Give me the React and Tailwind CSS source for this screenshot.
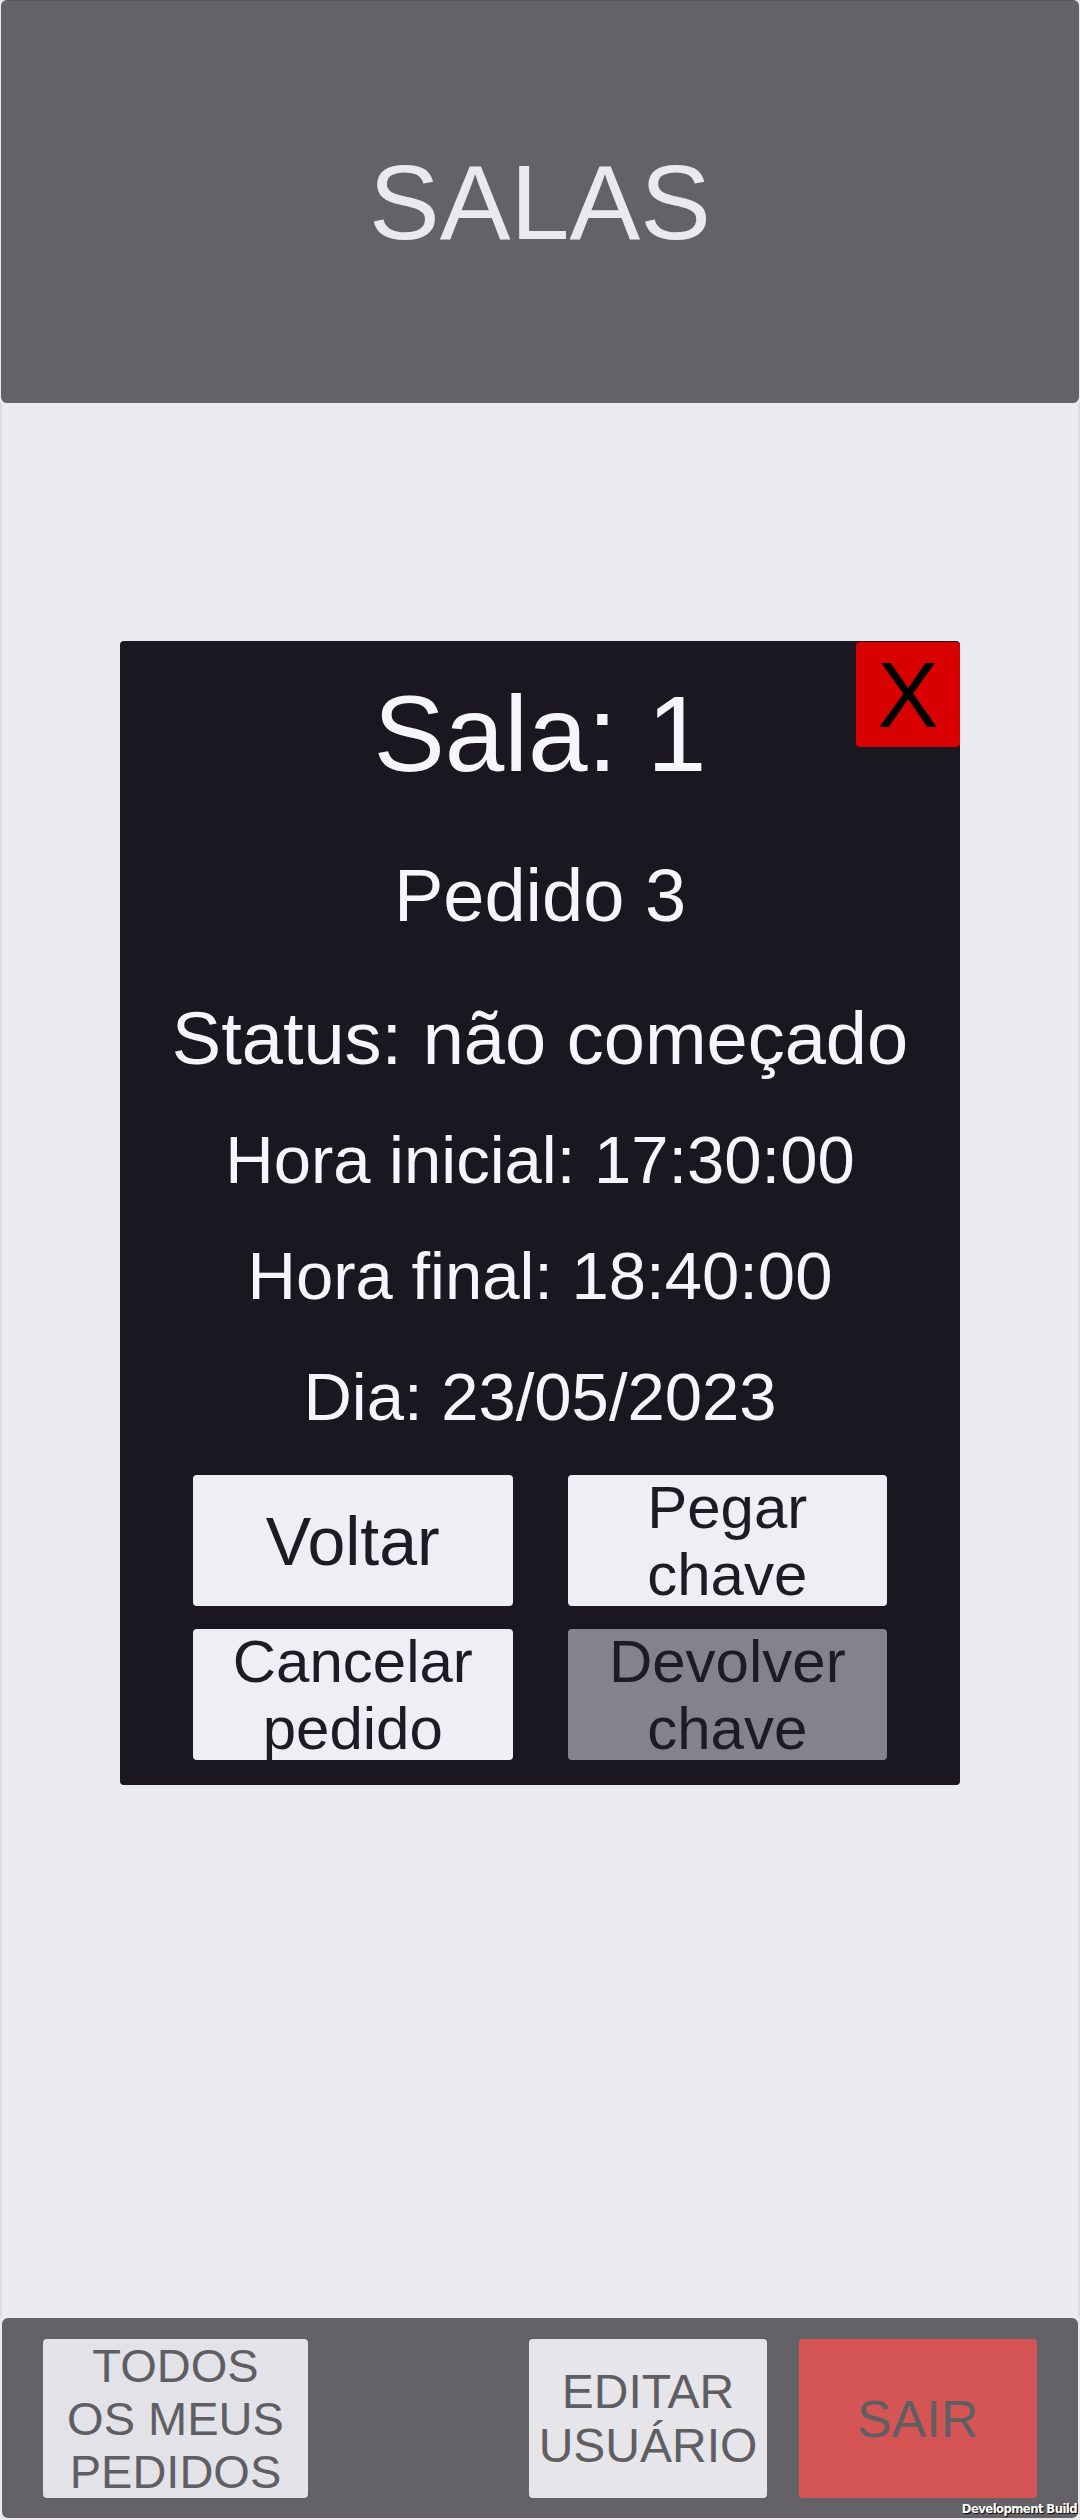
export default function App() {
  return (
    <div className="relative flex h-[2520px] w-[1080px] flex-col overflow-hidden bg-[#ebeaef] font-['Liberation_Sans',Arial,sans-serif]">
      <header className="mx-[1px] flex h-[403px] shrink-0 items-center justify-center rounded-[6px] border-t border-[#58565b] bg-[#646267] text-[106px] leading-none text-[#ebe9ef]">
        SALAS
      </header>

      <main className="flex flex-1 flex-col items-center border-x-2 border-[#dcdbe1] pt-[238px]">
        <section className="relative flex h-[1144px] w-[840px] flex-col items-center rounded-[4px] bg-[#1b1720] text-[#f7f5fc]">
          <button className="absolute right-0 top-[1px] flex h-[105px] w-[104px] items-center justify-center rounded-[4px] bg-[#d80000] text-[92px] leading-none text-black">
            X
          </button>
          <div className="mt-[40px] text-[107px] leading-none">Sala: 1</div>
          <div className="mt-[71px] text-[74px] leading-none">Pedido 3</div>
          <div className="mt-[69px] text-[74px] leading-none">Status: não começado</div>
          <div className="mt-[50px] text-[67px] leading-none">Hora inicial: 17:30:00</div>
          <div className="mt-[49px] text-[67px] leading-none">Hora final: 18:40:00</div>
          <div className="mt-[54px] text-[67px] leading-none">Dia: 23/05/2023</div>

          <div className="mt-[45px] grid w-full grid-cols-2 gap-x-[55px] gap-y-[23px] px-[73px] text-[#1e1b24]">
            <button className="flex h-[131px] items-center justify-center rounded-[4px] bg-[#efeef4] text-[68px] leading-none">Voltar</button>
            <button className="flex h-[131px] items-center justify-center rounded-[4px] bg-[#efeef4] text-[60px] leading-[67px]">
              <span>Pegar<br />chave</span>
            </button>
            <button className="flex h-[131px] items-center justify-center rounded-[4px] bg-[#efeef4] text-[60px] leading-[67px]">
              <span>Cancelar<br />pedido</span>
            </button>
            <button className="flex h-[131px] items-center justify-center rounded-[4px] bg-[#85828b] text-[60px] leading-[67px]">
              <span>Devolver<br />chave</span>
            </button>
          </div>
        </section>
      </main>

      <footer className="mx-[2px] mb-[2px] flex h-[200px] shrink-0 items-start rounded-[6px] bg-[#646267] px-[41px] pt-[21px] text-[#5f5e63]">
        <button className="flex h-[159px] w-[265px] items-center justify-center rounded-[4px] bg-[#e3e2e9] text-[47px] leading-[53px]">
          <span>TODOS<br />OS MEUS<br />PEDIDOS</span>
        </button>
        <button className="ml-auto flex h-[159px] w-[238px] items-center justify-center rounded-[4px] bg-[#e6e5ea] text-[48px] leading-[54px]">
          <span>EDITAR<br />USUÁRIO</span>
        </button>
        <button className="ml-[32px] flex h-[159px] w-[238px] items-center justify-center rounded-[4px] bg-[#d55454] text-[52px] leading-none">
          SAIR
        </button>
      </footer>

      <div className="absolute bottom-[5px] right-[3px] font-['DejaVu_Sans_Condensed','DejaVu_Sans',sans-serif] text-[13px] font-bold leading-none tracking-[-0.6px] text-white [font-stretch:condensed] [text-shadow:1px_1px_1px_#000]">
        Development Build
      </div>
    </div>
  );
}
